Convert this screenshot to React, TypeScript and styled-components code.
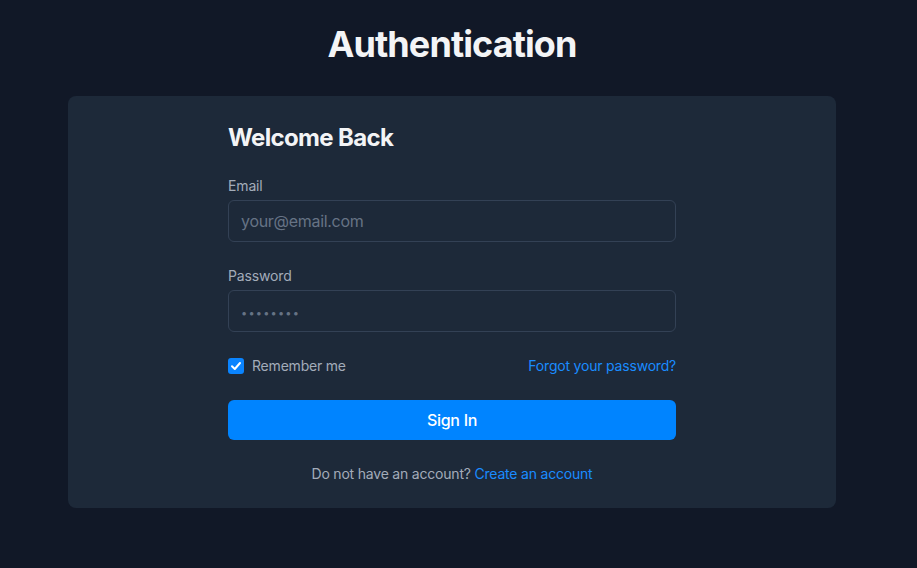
import React from "react";
import styled, { createGlobalStyle } from "styled-components";

const Global = createGlobalStyle`
  html, body { margin: 0; padding: 0; background: #111827; }
  body { font-family: Inter, "Noto Sans", sans-serif; -webkit-font-smoothing: antialiased; }
  * { box-sizing: border-box; }
`;

const Page = styled.div`
  width: 904px;
  min-height: 568px;
  padding: 24px 68px;
  display: flex;
  flex-direction: column;
  align-items: center;
  gap: 32px;
`;

const Title = styled.h1`
  margin: 0;
  font-size: 36px;
  line-height: 40px;
  font-weight: 700;
  letter-spacing: -0.9px;
  color: #f3f4f6;
`;

const Card = styled.div`
  width: 768px;
  background: #1d2939;
  border-radius: 8px;
  padding: 24px 0 24px;
  display: flex;
  justify-content: center;
`;

const Form = styled.form`
  width: 448px;
  display: flex;
  flex-direction: column;
  gap: 24px;
`;

const Heading = styled.h2`
  margin: 2px 0 -2px;
  font-size: 24px;
  line-height: 32px;
  font-weight: 700;
  letter-spacing: -0.65px;
  color: #f3f4f6;
`;

const Field = styled.div`
  display: flex;
  flex-direction: column;
  gap: 4px;
`;

const Label = styled.label`
  font-size: 14px;
  line-height: 20px;
  letter-spacing: -0.15px;
  color: #a3acb9;
`;

const Input = styled.input<{ $dots?: boolean }>`
  height: 42px;
  width: 100%;
  background: transparent;
  border: 1px solid #334155;
  border-radius: 6px;
  padding: 0 12px;
  font-family: inherit;
  font-size: 16px;
  color: #e5e7eb;
  outline: none;
  &::placeholder {
    color: #667385;
    letter-spacing: ${(p) => (p.$dots ? "1.2px" : "-0.3px")};
    font-size: ${(p) => (p.$dots ? "11px" : "16px")};
  }
`;

const Row = styled.div`
  display: flex;
  align-items: center;
  justify-content: space-between;
  height: 20px;
`;

const CheckLabel = styled.label`
  display: flex;
  align-items: center;
  gap: 8px;
  font-size: 14px;
  line-height: 20px;
  letter-spacing: -0.2px;
  color: #a3acb9;
`;

const Box = styled.span`
  width: 16px;
  height: 16px;
  border-radius: 3px;
  background: #0a84ff;
  display: inline-flex;
  align-items: center;
  justify-content: center;
`;

const Link = styled.a`
  color: #1a8cff;
  font-size: 14px;
  line-height: 20px;
  letter-spacing: -0.2px;
  text-decoration: none;
`;

const Button = styled.button`
  height: 40px;
  width: 100%;
  border: none;
  border-radius: 6px;
  background: #0084ff;
  color: #ffffff;
  font-family: inherit;
  font-size: 16px;
  font-weight: 500;
  letter-spacing: -0.3px;
`;

const Footer = styled.p`
  margin: 0;
  text-align: center;
  font-size: 14px;
  line-height: 20px;
  letter-spacing: -0.2px;
  color: #a3acb9;
`;

export default function App() {
  return (
    <>
      <Global />
      <Page>
        <Title>Authentication</Title>
        <Card>
          <Form onSubmit={(e) => e.preventDefault()}>
            <Heading>Welcome Back</Heading>
            <Field>
              <Label>Email</Label>
              <Input type="email" placeholder="your@email.com" />
            </Field>
            <Field>
              <Label>Password</Label>
              <Input $dots type="password" placeholder="••••••••" />
            </Field>
            <Row>
              <CheckLabel>
                <Box>
                  <svg width="12" height="12" viewBox="0 0 12 12">
                    <path d="M2 6.3 L4.8 9 L10 3" fill="none" stroke="#fff" strokeWidth="2" strokeLinecap="round" strokeLinejoin="round" />
                  </svg>
                </Box>
                Remember me
              </CheckLabel>
              <Link href="#">Forgot your password?</Link>
            </Row>
            <Button type="submit">Sign In</Button>
            <Footer>
              Do not have an account? <Link href="#">Create an account</Link>
            </Footer>
          </Form>
        </Card>
      </Page>
    </>
  );
}
